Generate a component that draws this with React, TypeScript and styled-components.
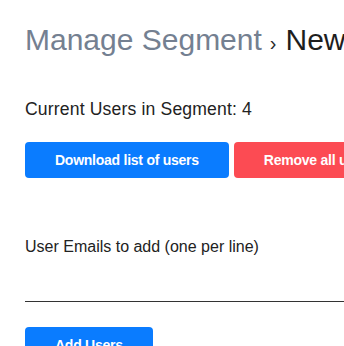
import React from "react";
import styled, { createGlobalStyle } from "styled-components";

const GlobalStyle = createGlobalStyle`
  html, body {
    margin: 0;
    padding: 0;
    overflow: hidden;
    background: #ffffff;
  }
  body {
    font-family: "Liberation Sans", Arial, Helvetica, sans-serif;
    color: #222222;
  }
`;

const Page = styled.div`
  display: flex;
  flex-direction: column;
  align-items: flex-start;
  padding: 23px 0 0 25px;
  width: 600px;
  box-sizing: border-box;
`;

const Title = styled.h1`
  margin: 0;
  height: 34px;
  font-size: 30px;
  line-height: 34px;
  font-weight: 400;
  white-space: nowrap;
  color: #748091;
`;

const Separator = styled.span`
  color: #2a2a2a;
  font-size: 20px;
  line-height: 16px;
  margin: 0 9px 0 8px;
`;

const Current = styled.span`
  color: #1e1e1e;
`;

const Count = styled.p`
  margin: 42px 0 0;
  font-size: 17.6px;
  line-height: 21px;
  letter-spacing: 0.15px;
  color: #222222;
  white-space: nowrap;
`;

const Label = styled.p`
  margin: 59px 0 0;
  font-size: 16px;
  line-height: 20px;
  color: #222222;
  white-space: nowrap;
`;

const ButtonRow = styled.div`
  display: flex;
  gap: 5px;
  margin-top: 22px;
`;

const Button = styled.button<{ $variant?: "primary" | "danger"; $top?: number }>`
  height: 36px;
  padding: 0 30px;
  margin: ${(p) => p.$top ?? 0}px 0 0;
  border: none;
  border-radius: 4px;
  background: ${(p) => (p.$variant === "danger" ? "#fc4b53" : "#0a7cff")};
  color: #ffffff;
  font-family: "Liberation Sans", Arial, Helvetica, sans-serif;
  font-size: 14px;
  font-weight: 700;
  letter-spacing: -0.25px;
  white-space: nowrap;
  cursor: pointer;
`;

const EmailInput = styled.textarea`
  display: block;
  width: 340px;
  height: 45px;
  margin: 0;
  padding: 0;
  border: none;
  border-bottom: 1px solid #333333;
  resize: none;
  outline: none;
  box-sizing: border-box;
  font-family: "Liberation Sans", Arial, Helvetica, sans-serif;
  font-size: 16px;
  background: transparent;
`;

export default function App() {
  return (
    <>
      <GlobalStyle />
      <Page>
        <Title>
          Manage Segment<Separator>›</Separator>
          <Current>New Segment</Current>
        </Title>
        <Count>Current Users in Segment: 4</Count>
        <ButtonRow>
          <Button $variant="primary">Download list of users</Button>
          <Button $variant="danger">Remove all users</Button>
        </ButtonRow>
        <Label>User Emails to add (one per line)</Label>
        <EmailInput />
        <Button $variant="primary" $top={25}>
          Add Users
        </Button>
      </Page>
    </>
  );
}
